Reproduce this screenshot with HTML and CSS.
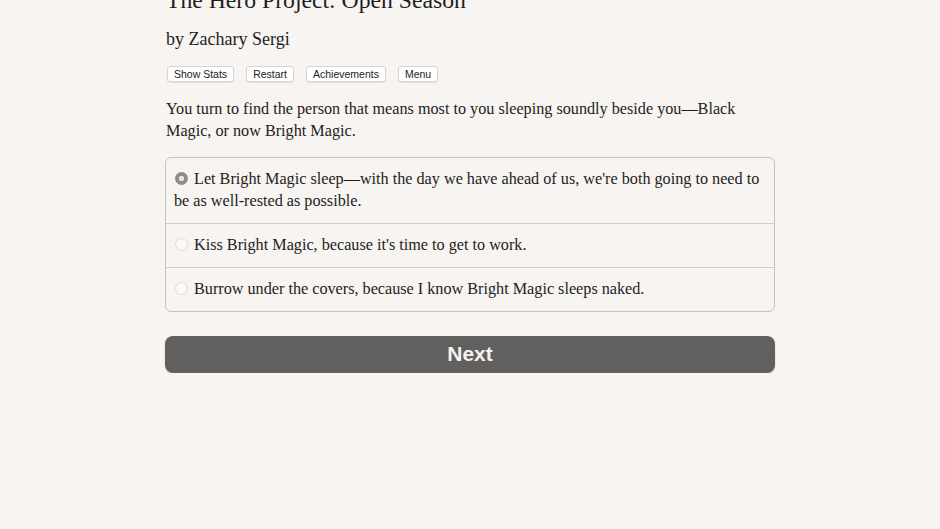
FILE: index.html
```html
<!DOCTYPE html>
<html>
<head>
<meta charset="utf-8">
<link rel="stylesheet" href="styles.css">
</head>
<body>
<div class="page">
  <h1 class="title">The Hero Project: Open Season</h1>
  <h2 class="author">by Zachary Sergi</h2>
  <div class="buttons">
    <button class="small-btn">Show Stats</button>
    <button class="small-btn">Restart</button>
    <button class="small-btn">Achievements</button>
    <button class="small-btn">Menu</button>
  </div>
  <p class="story">You turn to find the person that means most to you sleeping soundly beside you—Black Magic, or now Bright Magic.</p>
  <div class="choices">
    <label class="choice"><span class="radio checked"></span>Let Bright Magic sleep—with the day we have ahead of us, we're both going to need to be as well-rested as possible.</label>
    <label class="choice"><span class="radio"></span>Kiss Bright Magic, because it's time to get to work.</label>
    <label class="choice"><span class="radio"></span>Burrow under the covers, because I know Bright Magic sleeps naked.</label>
  </div>
  <button class="next">Next</button>
</div>
</body>
</html>
```
FILE: styles.css
```css
html, body {
  margin: 0;
  padding: 0;
  background: #f7f4f1;
}
body {
  font-family: "Liberation Serif", "Times New Roman", serif;
  color: #222;
}
.page {
  width: 610px;
  margin: 0 auto;
}
.title {
  font-weight: normal;
  font-size: 23.7px;
  line-height: 30px;
  margin: -15px 0 0 1px;
  color: #1e1e1e;
}
.author {
  font-weight: normal;
  font-size: 18px;
  line-height: 24px;
  margin: 12px 0 0 1px;
  color: #1e1e1e;
}
.buttons {
  display: flex;
  gap: 12px;
  margin: 15px 0 0 2px;
}
.small-btn {
  font-family: "Liberation Sans", Arial, sans-serif;
  font-size: 10.5px;
  height: 16px;
  line-height: 14px;
  padding: 0 6px;
  background: #fff;
  color: #222;
  border: 1px solid #d8d6d3;
  border-radius: 3px;
  box-shadow: 0 1px 1px rgba(0,0,0,0.08);
}
.story {
  font-size: 16.2px;
  line-height: 22px;
  margin: 16px 0 0 1px;
  color: #1e1e1e;
}
.choices {
  margin-top: 15px;
  border: 1px solid #c6c4c2;
  border-radius: 6px;
  display: flex;
  flex-direction: column;
}
.choice {
  display: block;
  font-size: 16.2px;
  line-height: 21.5px;
  padding: 11px 12px 10.5px 8px;
  color: #1e1e1e;
}
.choice + .choice {
  border-top: 1px solid #cfcdcb;
}
.radio {
  display: inline-block;
  width: 11px;
  height: 11px;
  border-radius: 50%;
  border: 1px solid #dddbd9;
  background: #fbfaf9;
  margin: 0 6px 0 1px;
  vertical-align: -1px;
}
.radio.checked {
  background: radial-gradient(circle, #e6e4e2 0 2.5px, #8c8b8a 3px);
  border-color: #8c8b8a;
}
.next {
  display: block;
  width: 100%;
  height: 37px;
  margin-top: 24px;
  background: #62605e;
  color: #f4f2ef;
  border: none;
  border-radius: 8px;
  font-family: "Liberation Sans", Arial, sans-serif;
  font-weight: bold;
  font-size: 21px;
  box-shadow: 0 1px 2px rgba(0,0,0,0.15);
}
```
